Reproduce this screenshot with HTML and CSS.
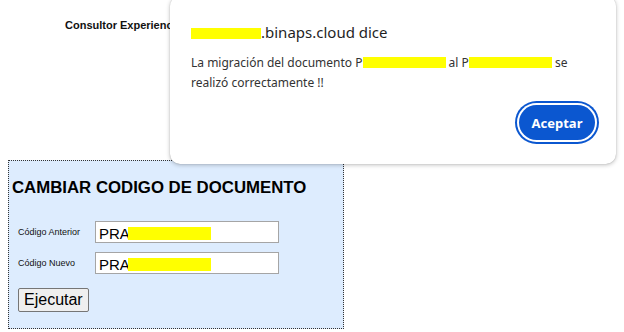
FILE: index.html
```html
<!DOCTYPE html>
<html lang="es">
<head>
<meta charset="UTF-8" />
<title>Cambiar codigo de documento</title>
<link rel="stylesheet" href="styles.css">
</head>
<body>

<div class="top-title">Consultor Experiencia</div>

<div class="panel">
  <h2>CAMBIAR CODIGO DE DOCUMENTO</h2>
  <div class="row">
    <label>Código Anterior</label>
    <div class="fake-input">PRA<span class="blur in-blur"></span></div>
  </div>
  <div class="row">
    <label>Código Nuevo</label>
    <div class="fake-input">PRA<span class="blur in-blur"></span></div>
  </div>
  <button class="run">Ejecutar</button>
</div>

<div class="dialog">
  <div class="dlg-title"><span class="blur host-blur"></span>.binaps.cloud dice</div>
  <div class="dlg-msg">
    La migración del documento P<span class="blur doc-blur"></span> al P<span class="blur doc-blur"></span> se<br>
    realizó correctamente !!
  </div>
  <div class="dlg-actions">
    <button class="ok">Aceptar</button>
  </div>
</div>

</body>
</html>
```

FILE: styles.css
```css
body {
  margin: 0;
  background: #fff;
  font-family: "Liberation Sans", Arial, sans-serif;
  width: 624px;
  height: 332px;
  overflow: hidden;
  position: relative;
}
.top-title {
  font-size: 11px;
  font-weight: bold;
  color: #111;
  padding: 19px 0 0 65px;
  height: 160px;
  box-sizing: border-box;
}
.panel {
  margin-left: 8px;
  width: 336px;
  height: 169px;
  box-sizing: border-box;
  background: #ddecfe;
  border: 1px dotted #333;
  padding: 0 0 0 3px;
}
.panel h2 {
  font-size: 16.8px;
  font-weight: bold;
  margin: 17px 0 23px 0;
  color: #000;
}
.row {
  display: flex;
  align-items: center;
  margin: 0 0 9px 6px;
}
.row label {
  font-size: 9px;
  color: #111;
  width: 77px;
}
.fake-input {
  width: 184px;
  height: 22px;
  box-sizing: border-box;
  border: 1px solid #a5a5a5;
  background: #fff;
  font-size: 15px;
  padding: 2px 0 0 3px;
  color: #000;
  display: flex;
  align-items: center;
}
.blur {
  display: inline-block;
  background: #ffff00;
}
.in-blur {
  width: 83px;
  height: 13px;
  margin-left: -2px;
}
.run {
  margin: 5px 0 0 6px;
  font-family: "Liberation Sans", Arial, sans-serif;
  font-size: 16px;
  padding: 1px 5px;
  height: 24px;
  background: #efefef;
  border: 1px solid #767676;
  border-radius: 2px;
  color: #000;
}
.dialog {
  position: absolute;
  left: 170px;
  top: -4px;
  width: 446px;
  height: 168px;
  box-sizing: border-box;
  background: #fff;
  border-radius: 10px;
  box-shadow: 0 1px 4px rgba(0, 0, 0, 0.25), 0 0 1px rgba(0, 0, 0, 0.3);
  padding: 25px 21px 0 21px;
  font-family: "Noto Sans", "Open Sans", sans-serif;
  color: #1f1f1f;
}
.dlg-title {
  font-size: 15px;
  display: flex;
  align-items: center;
  height: 22px;
}
.host-blur {
  width: 70px;
  height: 11px;
  margin-top: 3px;
}
.dlg-msg {
  font-size: 12px;
  line-height: 20px;
  margin-top: 10px;
  color: #333;
}
.doc-blur {
  width: 83px;
  height: 11px;
  vertical-align: -1px;
}
.dlg-actions {
  display: flex;
  justify-content: flex-end;
  margin-top: 12px;
  padding-right: 0;
}
.ok {
  width: 76px;
  height: 35px;
  border: none;
  border-radius: 18px;
  background: #0b57d0;
  color: #fff;
  font-family: "Noto Sans", "Open Sans", sans-serif;
  font-weight: bold;
  font-size: 13px;
  box-shadow: 0 0 0 2px #fff, 0 0 0 4px #0b57d0;
}
```
